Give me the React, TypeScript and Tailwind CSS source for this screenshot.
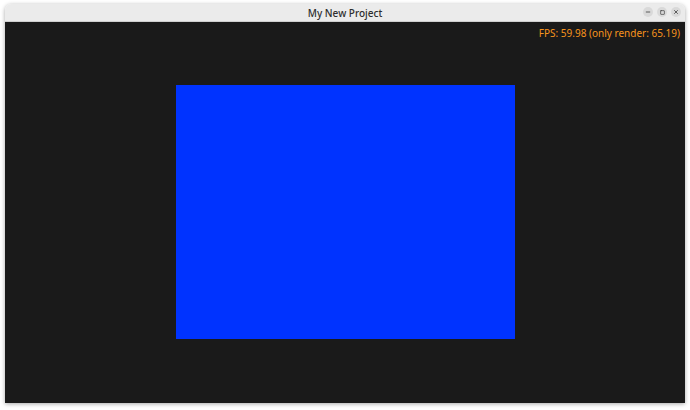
import { Minus, Square, X } from "lucide-react";

export default function App() {
  return (
    <div className="h-[410px] w-[690px] bg-white pl-[5px] pr-[5px] pt-[4px] font-['Noto_Sans',sans-serif]">
      <div className="flex h-[399px] w-[680px] flex-col overflow-hidden rounded-t-[6px] shadow-[0_1px_4px_rgba(0,0,0,0.35)]">
        <div className="relative flex h-[18px] shrink-0 items-center justify-center border-b border-[#cfcfcf] bg-[#ebebeb]">
          <span className="text-[10px] font-medium leading-none text-[#2e2e2e]">My New Project</span>
          <div className="absolute right-[4px] top-[3px] flex gap-[4px]">
            <span className="flex h-[10px] w-[10px] items-center justify-center rounded-full bg-[#d9d9d9]">
              <Minus className="h-[6px] w-[6px] text-[#333]" strokeWidth={3} />
            </span>
            <span className="flex h-[10px] w-[10px] items-center justify-center rounded-full bg-[#d9d9d9]">
              <Square className="h-[5px] w-[5px] text-[#333]" strokeWidth={3} />
            </span>
            <span className="flex h-[10px] w-[10px] items-center justify-center rounded-full bg-[#d9d9d9]">
              <X className="h-[6px] w-[6px] text-[#333]" strokeWidth={3} />
            </span>
          </div>
        </div>
        <div className="relative flex flex-1 items-center justify-center bg-[#1a1a1a] pb-[1px]">
          <div className="absolute right-[5px] top-[6px] text-[10px] leading-none text-[#f7941d]">
            FPS: 59.98 (only render: 65.19)
          </div>
          <div className="h-[254px] w-[339px] bg-[#0033ff]" />
        </div>
      </div>
    </div>
  );
}
